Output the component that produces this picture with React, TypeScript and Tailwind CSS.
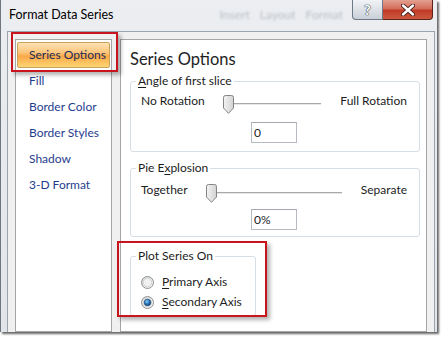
import React from "react";

function Thumb() {
  return (
    <svg width="11" height="19" viewBox="0 0 11 19" className="shrink-0">
      <defs>
        <linearGradient id="thumbFill" x1="0" x2="1" y1="0" y2="0">
          <stop offset="0" stopColor="#f4f4f4" />
          <stop offset="1" stopColor="#d2d2d2" />
        </linearGradient>
      </defs>
      <path
        d="M0.5 2.5 Q0.5 0.5 2.5 0.5 H8.5 Q10.5 0.5 10.5 2.5 V13 L5.5 18.3 L0.5 13 Z"
        fill="url(#thumbFill)"
        stroke="#858585"
      />
    </svg>
  );
}

function Slider({ left, right }: { left: string; right: string }) {
  return (
    <div className="flex items-center h-[20px]">
      <span className="shrink-0">{left}</span>
      <div className="flex-1 ml-[18px] mr-[19px] flex items-start h-[19px] mt-[6px]">
        <Thumb />
        <div className="flex-1 mt-[8px] h-[2px] border-t border-[#a9a9a9] bg-[#e6e6e6]" />
      </div>
      <span className="shrink-0">{right}</span>
    </div>
  );
}

function Radio({ checked, id }: { checked?: boolean; id: string }) {
  return (
    <svg width="13" height="13" viewBox="0 0 13 13" className="shrink-0">
      <defs>
        <linearGradient id={`${id}-o`} x1="0" y1="0" x2="1" y2="1">
          <stop offset="0" stopColor="#d6d6d6" />
          <stop offset="1" stopColor="#fbfbfb" />
        </linearGradient>
        <radialGradient id={`${id}-d`} cx="0.4" cy="0.35" r="0.7">
          <stop offset="0" stopColor="#8fd0f7" />
          <stop offset="0.5" stopColor="#2a7bc4" />
          <stop offset="1" stopColor="#0e3f73" />
        </radialGradient>
      </defs>
      <circle cx="6.5" cy="6.5" r="6" fill={`url(#${id}-o)`} stroke="#8e9296" />
      <circle cx="6.5" cy="6.5" r="4.2" fill="#f1f1f1" stroke="#c9cbcd" strokeWidth="0.8" />
      {checked && <circle cx="6.5" cy="6.5" r="3.3" fill={`url(#${id}-d)`} stroke="#1d3f63" strokeWidth="0.6" />}
    </svg>
  );
}

function ValueBox({ value }: { value: string }) {
  return (
    <div className="flex justify-center">
      <div className="w-[46px] h-[21px] border border-[#b6bac1] border-t-[#a3a7ae] bg-white pl-[2px] leading-[19px]">
        {value}
      </div>
    </div>
  );
}

export default function App() {
  const items = ["Series Options", "Fill", "Border Color", "Border Styles", "Shadow", "3-D Format"];

  return (
    <div className="relative w-[444px] h-[337px] bg-white overflow-hidden font-['Lato',sans-serif] text-[12px] text-[#1c1c1c]">
      <div className="w-[437px] h-[332px] flex flex-col border-l border-[#6f767e] bg-[linear-gradient(180deg,#eceef1_0%,#e1e5e9_100%)] shadow-[2px_2px_2px_rgba(0,0,0,0.6)]">
        {/* title bar */}
        <div className="h-[31px] shrink-0 flex items-start">
          <div className="shrink-0 whitespace-nowrap pl-[8px] pt-[7px] text-[12.5px] leading-[16px] text-black">
            Format Data Series
          </div>
          {/* window behind the glass, blurred */}
          <div className="min-w-0 flex-1 overflow-hidden ml-[106px] pt-[7px] flex gap-[10px] whitespace-nowrap text-[12px] leading-[16px] text-[#6f7680] opacity-40 blur-[1.2px]">
            <span>Insert</span>
            <span>Layout</span>
            <span>Format</span>
          </div>
          <div className="shrink-0 flex mr-[4px]">
            <div className="w-[31px] h-[20px] flex items-center justify-center rounded-bl-[4px] border border-t-0 border-[#6d7986] bg-[linear-gradient(180deg,#f1f3f5_0%,#dde2e7_50%,#c8cfd7_100%)]">
              <span className="text-[14px] font-bold leading-none text-white [text-shadow:0_0_1px_#3a4654,0_0_1px_#3a4654,0_0_1px_#3a4654]">?</span>
            </div>
            <div className="w-[50px] h-[20px] flex items-center justify-center rounded-br-[4px] border border-t-0 border-l-0 border-[#5d211a] bg-[linear-gradient(180deg,#e3a091_0%,#d46d5a_45%,#c23a25_55%,#cc5a3f_100%)]">
              <svg width="14" height="12" viewBox="0 0 14 12">
                <path d="M2 1.5 L12 10.5 M12 1.5 L2 10.5" stroke="#3d1a14" strokeWidth="4.2" strokeLinecap="round" />
                <path d="M2 1.5 L12 10.5 M12 1.5 L2 10.5" stroke="#ffffff" strokeWidth="2.4" strokeLinecap="round" />
              </svg>
            </div>
          </div>
        </div>

        {/* client area */}
        <div className="flex-1 ml-[6px] mr-[2px] flex gap-[8px] border-t border-x border-[#9aa4ae] bg-[#f0f0f0] pt-[7px] px-[7px]">
          {/* left list */}
          <div className="w-[97px] border border-[#a5a5a5] bg-white pt-[2px]">
            {items.map((item, i) => (
              <div
                key={item}
                className={
                  i === 0
                    ? "mx-[1px] h-[26px] flex items-center pl-[11px] rounded-[2px] border border-[#c9a25a] bg-[linear-gradient(180deg,#fde2b4_0%,#fcc57a_40%,#faa847_55%,#fdd574_100%)] text-[#1d2a58]"
                    : "mx-[1px] h-[26px] flex items-center pl-[11px] border border-transparent text-[#1f3d8e]"
                }
              >
                {item}
              </div>
            ))}
          </div>

          {/* content panel */}
          <div className="flex-1 border border-[#a5a5a5] bg-white pl-[9px] pr-[6px]">
            <div className="mt-[8px] h-[22px] leading-[22px] text-[16.5px] text-[#1e1e1e]">Series Options</div>

            <fieldset className="mt-[3px] border border-[#d5dfe5] rounded-[3px] pb-[8px]">
              <legend className="ml-[5px] px-[2px] leading-[16px]">
                <span className="underline underline-offset-2">A</span>ngle of first slice
              </legend>
              <div className="pl-[10px] pr-[12px]">
                <div className="mt-[2px]">
                  <Slider left="No Rotation" right="Full Rotation" />
                </div>
                <div className="mt-[11px]">
                  <ValueBox value="0" />
                </div>
              </div>
            </fieldset>

            <fieldset className="mt-[8px] border border-[#d5dfe5] rounded-[3px] pb-[6px]">
              <legend className="ml-[5px] px-[2px] leading-[16px]">
                Pie E<span className="underline underline-offset-2">x</span>plosion
              </legend>
              <div className="pl-[10px] pr-[12px]">
                <div className="mt-[4px]">
                  <Slider left="Together" right="Separate" />
                </div>
                <div className="mt-[9px]">
                  <ValueBox value="0%" />
                </div>
              </div>
            </fieldset>

            <fieldset className="mt-[11px] w-[126px] border border-[#d5dfe5] rounded-[3px] pb-[3px]">
              <legend className="ml-[5px] px-[2px] leading-[16px]">Plot Series On</legend>
              <div className="mt-[8px] pl-[10px] flex flex-col">
                <div className="h-[20px] flex items-center gap-[8px]">
                  <Radio id="r1" />
                  <span>
                    <span className="underline underline-offset-2">P</span>rimary Axis
                  </span>
                </div>
                <div className="h-[20px] flex items-center gap-[8px]">
                  <Radio id="r2" checked />
                  <span>
                    <span className="underline underline-offset-2">S</span>econdary Axis
                  </span>
                </div>
              </div>
            </fieldset>
          </div>
        </div>
      </div>

      {/* callout boxes */}
      <div className="absolute left-[11px] top-[32px] w-[107px] h-[40px] border-2 border-[#c8141c] shadow-[3px_3px_4px_rgba(0,0,0,0.3)]" />
      <div className="absolute left-[117px] top-[241px] w-[150px] h-[76px] border-2 border-[#c8141c] shadow-[3px_3px_4px_rgba(0,0,0,0.3)]" />
    </div>
  );
}
